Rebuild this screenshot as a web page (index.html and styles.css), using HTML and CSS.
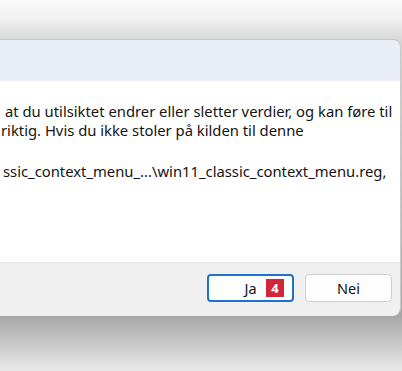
FILE: index.html
```html
<!DOCTYPE html>
<html>
<head>
  <meta charset="utf-8">
  <link rel="stylesheet" href="styles.css">
</head>
<body>
<div class="dialog">
  <div class="titlebar"></div>
  <div class="content">
    <div class="line line-1">at du utilsiktet endrer eller sletter verdier, og kan føre til</div>
    <div class="line line-2">riktig. Hvis du ikke stoler på kilden til denne</div>
    <div class="line line-3">ssic_context_menu_...\win11_classic_context_menu.reg,</div>
  </div>
  <div class="footer">
    <button class="btn btn-default">Ja<span class="badge">4</span></button>
    <button class="btn">Nei</button>
  </div>
</div>
</body>
</html>
```

FILE: styles.css
```css
html, body {
  margin: 0;
  height: 371px;
  overflow: hidden;
}
body {
  font: normal 14.8px "Noto Sans", "Open Sans", sans-serif;
  color: #141414;
  background: linear-gradient(to bottom, #fbfbfb 0, #f1f1f1 18px, #d9d9d9 39px, #a7a7a7 316px, #e9e9e9 371px);
  padding-top: 39px;
  box-sizing: border-box;
}
.dialog {
  width: 400px;
  border-top: 1px solid #c2c6ca;
  border-right: 1px solid #c9c9c9;
  border-top-right-radius: 8px;
  border-bottom-right-radius: 8px;
  overflow: hidden;
}
.titlebar {
  height: 41px;
  background: #e9eef6;
}
.content {
  height: 181px;
  background: #fff;
  padding-top: 21px;
  box-sizing: border-box;
}
.line {
  white-space: nowrap;
  line-height: 19px;
}
.line-1 {
  padding-left: 5px;
}
.line-2 {
  padding-left: 1px;
}
.line-3 {
  margin-top: 22px;
  padding-left: 3px;
}
.footer {
  height: 54px;
  background: #f0f0f0;
  border-top: 1px solid #e6e6e6;
  box-sizing: border-box;
  display: flex;
  justify-content: flex-end;
  align-items: flex-start;
  gap: 11px;
  padding: 11px 8px 0 0;
}
.btn {
  position: relative;
  width: 87px;
  height: 28px;
  border: 1px solid #cfcfcf;
  border-radius: 4px;
  background: #fdfdfd;
  font: inherit;
  font-size: 14.5px;
  color: #141414;
  padding: 0;
}
.btn-default {
  border: 2px solid #1a74c9;
}
.badge {
  position: absolute;
  left: 57px;
  top: 3px;
  width: 18px;
  height: 18px;
  background: #d1253a;
  color: #fff;
  font-weight: bold;
  font-size: 13px;
  line-height: 18px;
  text-align: center;
}
```
